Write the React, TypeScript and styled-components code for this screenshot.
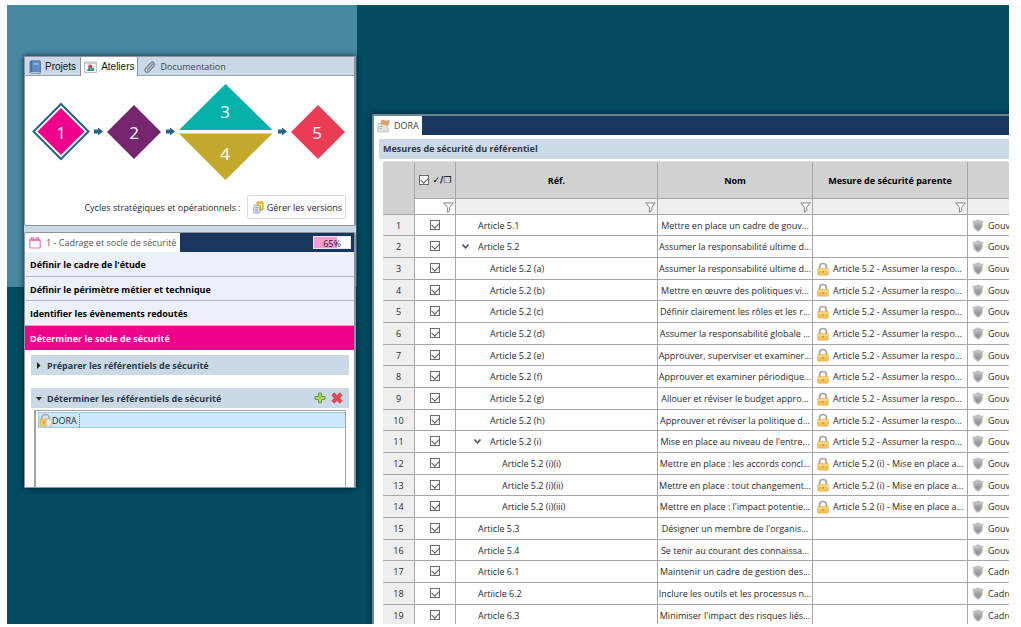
import React, { useState } from "react";
import styled, { createGlobalStyle, css } from "styled-components";

const uiFont = `"Open Sans", "Noto Sans", sans-serif`;

const GlobalStyle = createGlobalStyle`
  * { box-sizing: border-box; }
  body { margin: 0; background: #fff; font-family: ${uiFont}; font-size: 9px; color: #2b2b2b; }
  button, input { font: inherit; color: inherit; margin: 0; }
  button { border: 0; background: none; padding: 0; cursor: pointer; }
`;

const Desktop = styled.div`
  height: 100vh;
  padding: 5px 12px 3px 7px;
`;

const Wallpaper = styled.div`
  height: 100%;
  overflow: hidden;
  display: grid;
  grid-template-columns: 350px minmax(0, 1fr);
  background: #044a63;
`;

const Sidebar = styled.aside`
  padding: 51px 1px 0 17px;
  background: linear-gradient(#4688a2, #4688a2) top / 100% 282px no-repeat;
`;

const SideStack = styled.div`
  display: flex;
  flex-direction: column;
  gap: 6px;
  background: #cbd8e6;
  border-radius: 2px;
  box-shadow: 0 0 5px 1px rgba(0, 20, 35, 0.6);
`;

const Panel = styled.section`
  background: #fff;
  border: 1px solid #8d949c;
  border-right-width: 2px;
  border-radius: 2px;
  overflow: hidden;
`;

const TabBar = styled.div<{ $dark?: boolean }>`
  display: flex;
  align-items: stretch;
  height: 19px;
  ${(p) =>
    p.$dark
      ? css`
          background: #17375e;
        `
      : css`
          background: #cbd8e8;
          box-shadow: inset 0 -1px #98a0aa;
        `}
`;

const Tab = styled.button<{ $active?: boolean; $classic?: boolean }>`
  display: flex;
  align-items: center;
  gap: 4px;
  padding: 0 4px;
  white-space: nowrap;
  ${(p) =>
    p.$classic &&
    css`
      font-family: "Liberation Sans", Arial, sans-serif;
      font-size: 10px;
      color: #111;
      border-right: 1px solid #8d949c;
    `}
  ${(p) =>
    p.$active &&
    css`
      padding: 0 3px;
      background: #fff;
    `}
`;

const DocTab = styled(Tab)`
  padding: 0 6px;
  color: #444;
`;

const StepTab = styled(Tab)`
  padding: 0 4px;
  gap: 5px;
  color: #555;
`;

const Diagram = styled.svg`
  display: block;
  width: 330px;
  height: 108px;
  font-family: ${uiFont};
  font-weight: 400;
  font-size: 17px;
  text-anchor: middle;
  fill: #fff;
`;

const CycleRow = styled.div`
  display: flex;
  justify-content: flex-end;
  align-items: center;
  gap: 6px;
  padding: 11px 8px 6px;
`;

const VersionsButton = styled.button`
  display: flex;
  align-items: center;
  gap: 3px;
  height: 24px;
  padding: 0 3px 0 5px;
  border: 1px solid #dcdcdc;
  border-radius: 2px;
  background: #fdfdfd;
  white-space: nowrap;
`;

const Meter = styled.div`
  position: relative;
  width: 38px;
  height: 13px;
  margin: 3px 3px 3px auto;
  border: 1px solid #e6e6ec;
  background: #fff;
  line-height: 13px;
  text-align: center;
  color: #222;
`;

const MeterFill = styled.div`
  position: absolute;
  inset: 0 auto 0 0;
  background: #f99bd0;
`;

const MeterText = styled.span`
  position: relative;
`;

const StepList = styled.div`
  display: grid;
  grid-auto-rows: 1fr;
  height: 98px;
`;

const StepItem = styled.button<{ $current?: boolean }>`
  padding: 2px 5px 0;
  text-align: left;
  font-weight: 700;
  border-bottom: 1px solid ${(p) => (p.$current ? "#ee008c" : "#b4bac2")};
  background: ${(p) => (p.$current ? "#ee008c" : "#ecf1f9")};
  color: ${(p) => (p.$current ? "#fff" : "#000")};
`;

const StepBody = styled.div`
  display: flex;
  flex-direction: column;
  padding: 5px 5px 0 6px;
`;

const SectionBar = styled.div`
  display: flex;
  align-items: center;
  gap: 5px;
  height: 20px;
  padding: 0 6px 0 5px;
  background: #cbd8e6;
  font-weight: 700;
  color: #2c3a4a;

  & + & {
    margin-top: 13px;
  }
`;

const SectionToggle = styled.button`
  display: flex;
  flex: 1;
  align-items: center;
  gap: 5px;
  text-align: left;
`;

const IconButton = styled.button`
  display: flex;
`;

const ReferenceList = styled.div`
  height: 77px;
  margin: 2px 3px 0;
  padding-left: 2px;
  border: solid #a5a5a5;
  border-width: 1px 1px 0 2px;
`;

const ReferenceItem = styled.button`
  display: flex;
  align-items: center;
  width: 100%;
  height: 16px;
  margin-top: 1px;
  border: 1px solid #99cbf0;
  border-right: 0;
  background: #cce8ff;
`;

const ReferenceName = styled.span`
  padding-right: 2px;
  border-right: 1px dotted #777;
`;

const Main = styled.main`
  display: flex;
  min-height: 0;
  padding: 109px 0 0 15px;
`;

const Editor = styled.section`
  flex: 1;
  min-width: 0;
  overflow: hidden;
  border: solid #6f8794;
  border-width: 2px 0 0 2px;
  border-radius: 2px 0 0 0;
  background: #fff;
  box-shadow: 0 0 5px 1px rgba(0, 20, 35, 0.6);
`;

const EditorTab = styled(Tab)`
  padding: 0 3px;
  color: #444;
`;

const Heading = styled.h2`
  height: 20px;
  margin: 4px 0 2px 5px;
  padding: 0 4px;
  font-size: 9px;
  line-height: 20px;
  color: #333b45;
  background: #cbd9e9;
`;

const Grid = styled.table`
  width: calc(100% - 9px);
  margin-left: 9px;
  table-layout: fixed;
  border-collapse: separate;
  border-spacing: 0;
  border-top: 1px solid #dde2e6;
  white-space: nowrap;
`;

const Column = styled.col<{ $w?: number }>`
  width: ${(p) => (p.$w ? `${p.$w}px` : "auto")};
`;

const cell = css`
  padding: 0;
  border: solid #a6a6a6;
  border-width: 0 1px 1px 0;
  overflow: hidden;
  vertical-align: middle;

  &:last-child {
    border-right: 0;
  }
`;

const HeadCell = styled.th`
  ${cell}
  height: 37px;
  background: #d1d1d1;
  color: #000;
`;

const FilterCell = styled.td<{ $first?: boolean }>`
  ${cell}
  height: 16px;
  padding-right: 1px;
  text-align: right;
  background: ${(p) => (p.$first ? "#fff" : "#efefef")};
  svg { display: inline-block; vertical-align: middle; }
`;

const DataRow = styled.tr`
  height: 22px;
  &:nth-child(3n + 1) {
    height: 21px;
  }
`;

const IndexCell = styled.th`
  ${cell}
  font-weight: 400;
  background: #eee;
`;

const Cell = styled.td<{ $center?: boolean }>`
  ${cell}
  text-align: ${(p) => (p.$center ? "center" : "left")};
`;

const IconText = styled.div<{ $gap: number }>`
  display: flex;
  align-items: center;
  gap: ${(p) => p.$gap}px;
  padding-left: 4px;
  svg { flex: none; }
`;

const TreeLabel = styled.div<{ $level: number }>`
  display: flex;
  align-items: center;
  padding-left: ${(p) => 5 + p.$level * 12}px;
`;

const Twisty = styled.button`
  display: flex;
  width: 17px;
  height: 10px;
`;

const TwistySpace = styled.span`
  width: 17px;
`;

const CheckAll = styled.label`
  display: flex;
  align-items: center;
  justify-content: center;
  gap: 4px;
  font-family: "DejaVu Sans", sans-serif;
`;

const CheckSlot = styled.div`
  display: flex;
  justify-content: center;
  padding: 0 1px 1px 0;
`;

const Check = styled.input`
  appearance: none;
  position: relative;
  width: 10px;
  height: 10px;
  border: 1px solid #6a6a6a;
  background: #fff;

  &:checked::after {
    content: "";
    position: absolute;
    left: 1px;
    top: 1px;
    width: 6px;
    height: 4px;
    border: solid #5a5a5a;
    border-width: 0 0 1px 1px;
    transform: rotate(-45deg);
  }
`;

const BookIcon = () => (
  <svg width="12" height="14" viewBox="0 0 12 14">
    <path d="M1 2Q1 .8 2.200.8H10.500Q11.500.8 11.500 1.800V12.200H2.500Q1 12.200 1 13Z" fill="#5b8dc4" stroke="#44699a" strokeWidth=".8" />
    <path d="M1 11.800H11.200V13.300H2Q1 13.300 1 12Z" fill="#e5ebf2" stroke="#44699a" strokeWidth=".6" />
    <path d="M2.600 1.200V11.500" stroke="#3d6aa3" />
    <rect x="4.500" y="3" width="5" height="2" fill="#8fb4dc" />
  </svg>
);

const WorkshopIcon = () => (
  <svg width="13" height="12" viewBox="0 0 13 12">
    <rect x=".5" y="1" width="12" height="10.500" fill="#f6f8fa" stroke="#a9b4c0" strokeWidth=".8" />
    <rect x=".5" y="1" width="12" height="2" fill="#c4ccd6" />
    <circle cx="6.200" cy="5.400" r="2" fill="#d9433f" />
    <path d="M2.800 10 5 6.300 7.200 10Z" fill="#3e75c0" />
    <rect x="6.400" y="6.600" width="3.800" height="3.400" fill="#43a05c" />
  </svg>
);

const ClipIcon = () => (
  <svg width="12" height="12" viewBox="0 0 12 12" fill="none" stroke="#82898f" strokeLinecap="round">
    <path d="M3.500 8.800 8.600 3.300Q9.600 2.300 10.400 3.100 11 3.900 10.100 4.900L5 10.200Q3 12 1.400 10.400.1 8.900 1.900 7L7 1.800Q8.300.6 9.600 1.300" strokeWidth="1.400" />
  </svg>
);

const VersionsIcon = () => (
  <svg width="11" height="13" viewBox="0 0 11 13">
    <rect x="4" y=".8" width="6.200" height="8.400" rx=".8" fill="#f0bd3a" stroke="#d3a335" strokeWidth=".8" />
    <path d="M6 3.500H8.500V7" fill="none" stroke="#fff0c0" />
    <rect x=".8" y="4.200" width="6" height="8" rx=".8" fill="#dde5f0" stroke="#8b9dba" strokeWidth=".8" />
    <path d="M2.200 6.500H5.400M2.200 8.300H5.400M2.200 10.100H5.400" stroke="#7d95bd" strokeWidth=".8" />
  </svg>
);

const CalendarIcon = () => (
  <svg width="12" height="12" viewBox="0 0 12 12" fill="none" stroke="#f56fb8">
    <rect x=".8" y="2.500" width="10.400" height="8.500" rx="1" strokeWidth="1.200" />
    <path d="M1 3.300H11" strokeWidth="1.400" />
    <path d="M2.400 2.500V.8H4.600V2.500M7.400 2.500V.8H9.600V2.500" strokeWidth="1.200" />
  </svg>
);

const PlusIcon = () => (
  <svg width="12" height="12" viewBox="0 0 12 12">
    <path d="M4.500 1H7.500V4.500H11V7.500H7.500V11H4.500V7.500H1V4.500H4.500Z" fill="#a9d45f" stroke="#6aa544" strokeLinejoin="round" />
  </svg>
);

const DeleteIcon = () => (
  <svg width="12" height="12" viewBox="0 0 12 12">
    <path d="M3.200.8 6 3.500 8.800.8 11.200 3.200 8.500 6 11.200 8.800 8.800 11.200 6 8.500 3.200 11.200.8 8.800 3.500 6 .8 3.200Z" fill="#e8474d" stroke="#c9383e" strokeWidth=".7" strokeLinejoin="round" />
  </svg>
);

const ArrowHead = ({ open }: { open: boolean }) => (
  <svg width="6" height="8" viewBox="0 0 6 8">
    <path d={open ? "M0 3H6L3 6.500Z" : "M1 1 4.500 4.500 1 8Z"} fill="#222" />
  </svg>
);

const LockIcon = () => (
  <svg width="12" height="14" viewBox="0 0 12 14">
    <path d="M2.600 7.500V4.600Q2.600 1.500 6 1.500T9.400 4.600V7.500" fill="none" stroke="#a3a3a3" strokeWidth="1.700" />
    <rect x=".7" y="6.400" width="10.600" height="6.800" rx=".7" fill="#f6c253" stroke="#e0ab5c" strokeWidth=".6" />
    <path d="M1.200 7.300H10.800V9H1.200Z" fill="#fbdc86" />
    <path d="M6 9V11" stroke="#c98f3c" strokeWidth="1.200" />
  </svg>
);

const PadlockPairIcon = () => (
  <svg width="13" height="14" viewBox="0 0 13 14">
    <path d="M3 7V4.500Q3 1.500 6.500 1.500T10 4.500V7" fill="none" stroke="#a9a9a9" strokeWidth="1.600" />
    <rect x="1" y="6" width="7" height="7" fill="#f6c75a" stroke="#dca04a" strokeWidth=".6" />
    <rect x="7" y="6" width="5.300" height="7" fill="#eeeae4" stroke="#aaa" strokeWidth=".6" />
    <path d="M5 8.500V10.500" stroke="#b57a26" />
  </svg>
);

const ShieldIcon = () => (
  <svg width="12" height="13" viewBox="0 0 12 13">
    <path d="M.6 1.900Q2.500 2.500 3.700 1.500 6 -.2 8.300 1.500 9.500 2.500 11.400 1.900L10.600 4.500Q11.600 10 6 12.600.4 10 1.400 4.500Z" fill="#bdbdbf" stroke="#cdcdcf" strokeWidth=".7" />
    <path d="M2.600 4.800H9.400Q9.700 9.300 6 11.400 2.300 9.300 2.600 4.800Z" fill="#98989c" />
    <path d="M2.900 5H9.100V6.800H2.900Z" fill="#a8a8ac" />
  </svg>
);

const FunnelIcon = () => (
  <svg width="11" height="11" viewBox="0 0 11 11" fill="#fafafa" stroke="#858585" strokeLinejoin="round">
    <path d="M.7.9H10.300L6.700 5.300V8.600L4.400 10.300V5.300Z" />
  </svg>
);

const ChevronIcon = () => (
  <svg width="9" height="9" viewBox="0 0 9 9" fill="none" stroke="#555" strokeWidth="1.700">
    <path d="M1.500 2.500 4.500 5.800 7.500 2.500" />
  </svg>
);

const MeasuresIcon = () => (
  <svg width="13" height="14" viewBox="0 0 13 14">
    <path d="M1 4.500H10.500L11.500 12.800H.8Z" fill="#e2e2e2" stroke="#b0b0b0" strokeWidth=".7" />
    <path d="M2.500 7.500H6M2.500 9.500H5" stroke="#aaa" strokeWidth=".8" />
    <path d="M4 1.800Q6 .5 7.500 1.500T12.200 1.200L12 5Q10 7.200 8 5.800T4.500 5.500Z" fill="#e0a068" stroke="#c98a55" strokeWidth=".5" />
  </svg>
);

const flowArrow = "M0-2H4V-4L9 0 4 4V2H0Z";

const WorkshopDiagram = () => (
  <Diagram viewBox="0 0 330 108" role="img" aria-label="Ateliers 1 à 5">
    <path d="M36 28 63.500 55.500 36 83 8.500 55.500Z" fill="#fff" stroke="#24648f" strokeWidth="2" />
    <path d="M36 32 59.500 55.500 36 79 12.500 55.500Z" fill="#ee008c" />
    <path d="M109 29 136 56 109 83 82 56Z" fill="#76266f" />
    <path d="M200.500 8 247.500 54H154Z" fill="#06b1aa" />
    <path d="M154 57.500H247.500L200.500 104Z" fill="#c3aa2e" />
    <path d="M293 29 320 56 293 83 266 56Z" fill="#ea3d55" />
    <g fill="#24648f">
      <path d={flowArrow} transform="translate(69 55.500)" />
      <path d={flowArrow} transform="translate(141 55.500)" />
      <path d={flowArrow} transform="translate(253 55.500)" />
    </g>
    <text x="36" y="63">1</text>
    <text x="109" y="63">2</text>
    <text x="200" y="42">3</text>
    <text x="200" y="84">4</text>
    <text x="292" y="63">5</text>
  </Diagram>
);

const steps = [
  "Définir le cadre de l'étude",
  "Définir le périmètre métier et technique",
  "Identifier les évènements redoutés",
  "Déterminer le socle de sécurité",
];

type Measure = { ref: string; level: number; open?: boolean; name: string; parent?: string; group: string };

const assume = "Article 5.2 - Assumer la respo...";
const setup = "Article 5.2 (i) - Mise en place a...";
const gov = "Gouvernance";
const frame = "Cadre de gestion";

const measures: Measure[] = [
  { ref: "Article 5.1", level: 0, name: "Mettre en place un cadre de gouv...", group: gov },
  { ref: "Article 5.2", level: 0, open: true, name: "Assumer la responsabilité ultime d...", group: gov },
  { ref: "Article 5.2 (a)", level: 1, name: "Assumer la responsabilité ultime d...", parent: assume, group: gov },
  { ref: "Article 5.2 (b)", level: 1, name: "Mettre en œuvre des politiques vi...", parent: assume, group: gov },
  { ref: "Article 5.2 (c)", level: 1, name: "Définir clairement les rôles et les r...", parent: assume, group: gov },
  { ref: "Article 5.2 (d)", level: 1, name: "Assumer la responsabilité globale ...", parent: assume, group: gov },
  { ref: "Article 5.2 (e)", level: 1, name: "Approuver, superviser et examiner...", parent: assume, group: gov },
  { ref: "Article 5.2 (f)", level: 1, name: "Approuver et examiner périodique...", parent: assume, group: gov },
  { ref: "Article 5.2 (g)", level: 1, name: "Allouer et réviser le budget appro...", parent: assume, group: gov },
  { ref: "Article 5.2 (h)", level: 1, name: "Approuver et réviser la politique d...", parent: assume, group: gov },
  { ref: "Article 5.2 (i)", level: 1, open: true, name: "Mise en place au niveau de l'entre...", parent: assume, group: gov },
  { ref: "Article 5.2 (i)(i)", level: 2, name: "Mettre en place : les accords concl...", parent: setup, group: gov },
  { ref: "Article 5.2 (i)(ii)", level: 2, name: "Mettre en place : tout changement...", parent: setup, group: gov },
  { ref: "Article 5.2 (i)(iii)", level: 2, name: "Mettre en place : l'impact potentie...", parent: setup, group: gov },
  { ref: "Article 5.3", level: 0, name: "Désigner un membre de l'organis...", group: gov },
  { ref: "Article 5.4", level: 0, name: "Se tenir au courant des connaissa...", group: gov },
  { ref: "Article 6.1", level: 0, name: "Maintenir un cadre de gestion des...", group: frame },
  { ref: "Artiicle 6.2", level: 0, name: "Inclure les outils et les processus n...", group: frame },
  { ref: "Article 6.3", level: 0, name: "Minimiser l'impact des risques liés...", group: frame },
];

export default function App() {
  const [checked, setChecked] = useState(() => measures.map(() => true));
  const progress = 65;

  return (
    <Desktop>
      <GlobalStyle />
      <Wallpaper>
        <Sidebar>
          <SideStack>
            <Panel>
              <TabBar>
                <Tab $classic><BookIcon />Projets</Tab>
                <Tab $classic $active><WorkshopIcon />Ateliers</Tab>
                <DocTab><ClipIcon />Documentation</DocTab>
              </TabBar>
              <WorkshopDiagram />
              <CycleRow>
                Cycles stratégiques et opérationnels :
                <VersionsButton><VersionsIcon />Gérer les versions</VersionsButton>
              </CycleRow>
            </Panel>
            <Panel>
              <TabBar $dark>
                <StepTab $active><CalendarIcon />1 - Cadrage et socle de sécurité</StepTab>
                <Meter>
                  <MeterFill style={{ width: `${progress}%` }} />
                  <MeterText>{progress}%</MeterText>
                </Meter>
              </TabBar>
              <StepList>
                {steps.map((s, i) => (
                  <StepItem key={s} $current={i === 3}>{s}</StepItem>
                ))}
              </StepList>
              <StepBody>
                <SectionBar>
                  <SectionToggle aria-expanded={false}><ArrowHead open={false} />Préparer les référentiels de sécurité</SectionToggle>
                </SectionBar>
                <SectionBar>
                  <SectionToggle aria-expanded><ArrowHead open />Déterminer les référentiels de sécurité</SectionToggle>
                  <IconButton aria-label="Ajouter"><PlusIcon /></IconButton>
                  <IconButton aria-label="Supprimer"><DeleteIcon /></IconButton>
                </SectionBar>
                <ReferenceList>
                  <ReferenceItem><PadlockPairIcon /><ReferenceName>DORA</ReferenceName></ReferenceItem>
                </ReferenceList>
              </StepBody>
            </Panel>
          </SideStack>
        </Sidebar>
        <Main>
          <Editor>
            <TabBar $dark>
              <EditorTab $active><MeasuresIcon />DORA</EditorTab>
            </TabBar>
            <Heading>Mesures de sécurité du référentiel</Heading>
            <Grid>
              <colgroup>
                <Column $w={32} />
                <Column $w={41} />
                <Column $w={202} />
                <Column $w={155} />
                <Column $w={155} />
                <Column />
              </colgroup>
              <thead>
                <tr>
                  <HeadCell rowSpan={2} />
                  <HeadCell>
                    <CheckAll>
                      <Check
                        type="checkbox"
                        checked={checked.every(Boolean)}
                        onChange={(e) => setChecked(checked.map(() => e.target.checked))}
                      />
                      ✓/❐
                    </CheckAll>
                  </HeadCell>
                  <HeadCell>Réf.</HeadCell>
                  <HeadCell>Nom</HeadCell>
                  <HeadCell>Mesure de sécurité parente</HeadCell>
                  <HeadCell />
                </tr>
                <tr>
                  <FilterCell $first><FunnelIcon /></FilterCell>
                  <FilterCell><FunnelIcon /></FilterCell>
                  <FilterCell><FunnelIcon /></FilterCell>
                  <FilterCell><FunnelIcon /></FilterCell>
                  <FilterCell />
                </tr>
              </thead>
              <tbody>
                {measures.map((m, i) => (
                  <DataRow key={i}>
                    <IndexCell scope="row">{i + 1}</IndexCell>
                    <Cell>
                      <CheckSlot>
                        <Check
                          type="checkbox"
                          aria-label={m.ref}
                          checked={checked[i]}
                          onChange={() => setChecked(checked.map((c, j) => (j === i ? !c : c)))}
                        />
                      </CheckSlot>
                    </Cell>
                    <Cell>
                      <TreeLabel $level={m.level}>
                        {m.open ? <Twisty aria-label="Réduire"><ChevronIcon /></Twisty> : <TwistySpace />}
                        {m.ref}
                      </TreeLabel>
                    </Cell>
                    <Cell $center>{m.name}</Cell>
                    <Cell>{m.parent && <IconText $gap={4}><LockIcon />{m.parent}</IconText>}</Cell>
                    <Cell><IconText $gap={4}><ShieldIcon />{m.group}</IconText></Cell>
                  </DataRow>
                ))}
              </tbody>
            </Grid>
          </Editor>
        </Main>
      </Wallpaper>
    </Desktop>
  );
}
